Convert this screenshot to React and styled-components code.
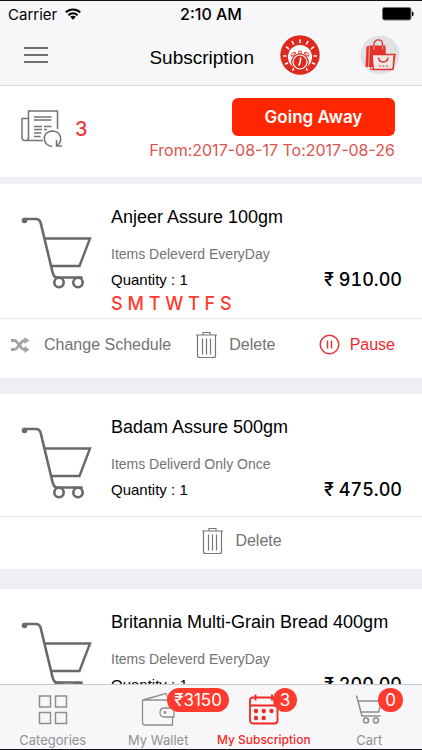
import styled, { createGlobalStyle } from 'styled-components';

const GlobalStyle = createGlobalStyle`
  * {
    box-sizing: border-box;
  }

  body {
    margin: 0;
    background: #efeef4;
    color: #000;
    font-family: "Liberation Sans", Arial, sans-serif;
  }

  button {
    padding: 0;
    border: none;
    background: none;
    font: inherit;
    color: inherit;
    cursor: pointer;
  }
`;

const red = '#ff3b30';
const grey = '#737373';

const subscriptions = [
  {
    id: 1,
    name: 'Anjeer Assure 100gm',
    delivery: 'Items Deleverd EveryDay',
    quantity: 1,
    price: '910.00',
    days: 'S M T W T F S',
    daily: true,
  },
  {
    id: 2,
    name: 'Badam Assure 500gm',
    delivery: 'Items Deliverd Only Once',
    quantity: 1,
    price: '475.00',
    daily: false,
  },
  {
    id: 3,
    name: 'Britannia Multi-Grain Bread 400gm',
    delivery: 'Items Deleverd EveryDay',
    quantity: 1,
    price: '200.00',
    days: 'S M T W T F S',
    daily: true,
  },
];

function App() {
  return (
    <Screen>
      <GlobalStyle />
      <Top>
        <StatusBar>
          <Carrier>
            Carrier
            <WifiIcon />
          </Carrier>
          <Clock>2:10 AM</Clock>
          <BatteryIcon />
        </StatusBar>
        <NavBar>
          <MenuButton aria-label="Menu">
            <MenuIcon />
          </MenuButton>
          <PageTitle>Subscription</PageTitle>
          <button aria-label="Reminders">
            <AlarmIcon />
          </button>
          <BagButton aria-label="Shop">
            <BagIcon />
          </BagButton>
        </NavBar>
      </Top>
      <Content>
        <Summary>
          <Count>
            <ScheduleIcon />
            3
          </Count>
          <Away>
            <AwayButton>Going Away</AwayButton>
            <AwayDates>From:2017-08-17 To:2017-08-26</AwayDates>
          </Away>
        </Summary>
        {subscriptions.map((item) => (
          <SubscriptionCard key={item.id} item={item} />
        ))}
      </Content>
      <TabBar>
        <Tab href="#categories">
          <GridIcon />
          Categories
        </Tab>
        <Tab href="#wallet">
          <WalletIcon />
          <Badge>₹3150</Badge>
          My Wallet
        </Tab>
        <Tab href="#subscription" $active>
          <CalendarIcon />
          <Badge>3</Badge>
          My Subscription
        </Tab>
        <Tab href="#cart">
          <SmallCartIcon />
          <Badge>0</Badge>
          Cart
        </Tab>
      </TabBar>
    </Screen>
  );
}

export default App;

function SubscriptionCard({ item }) {
  return (
    <Card $daily={item.daily}>
      <CardBody $daily={item.daily}>
        <CartIcon />
        <Details>
          <ItemName>{item.name}</ItemName>
          <Delivery>{item.delivery}</Delivery>
          <QuantityRow>
            <span>Quantity : {item.quantity}</span>
            <Price>₹ {item.price}</Price>
          </QuantityRow>
          {item.days && <Days>{item.days}</Days>}
        </Details>
      </CardBody>
      {item.daily ? (
        <DailyActions>
          <Action $gap={14}>
            <ShuffleIcon />
            Change Schedule
          </Action>
          <Action $gap={12}>
            <TrashIcon />
            Delete
          </Action>
          <Action $gap={10} $color="#f0282d">
            <PauseIcon />
            Pause
          </Action>
        </DailyActions>
      ) : (
        <OnceActions>
          <Action $gap={12}>
            <TrashIcon />
            Delete
          </Action>
        </OnceActions>
      )}
    </Card>
  );
}

const Screen = styled.div`
  display: flex;
  flex-direction: column;
  height: 100vh;
  overflow: hidden;
  border-top: 1px solid #15131a;
  border-bottom: 1px solid #15131a;
`;

const Top = styled.header`
  flex: none;
  background: #f7f7f9;
  border-bottom: 1px solid #dcdcdf;
`;

const StatusBar = styled.div`
  display: grid;
  grid-template-columns: 1fr auto 1fr;
  align-items: center;
  height: 26px;
  padding: 0 8px;
  font-family: Inter, "Liberation Sans", sans-serif;
  font-size: 15px;

  > svg {
    justify-self: end;
  }
`;

const Carrier = styled.div`
  display: flex;
  align-items: center;
  gap: 8px;
`;

const Clock = styled.div`
  font-size: 16px;
  font-weight: 500;
`;

const NavBar = styled.div`
  display: flex;
  align-items: center;
  height: 58px;
  padding: 0 22px 2px 24px;

  svg {
    display: block;
  }
`;

const MenuButton = styled.button`
  margin-right: auto;
`;

const PageTitle = styled.h1`
  margin: 0 26px 0 0;
  padding-top: 6px;
  font-size: 19px;
  font-weight: 400;
  line-height: 24px;
`;

const BagButton = styled.button`
  margin-left: 40px;
`;

const Content = styled.main`
  flex: 1;
  min-height: 0;
  overflow: hidden;
`;

const Summary = styled.section`
  display: flex;
  justify-content: space-between;
  align-items: flex-start;
  height: 91px;
  margin-bottom: 7px;
  padding: 12px 27px 0 20px;
  background: #fff;
`;

const Count = styled.div`
  display: flex;
  align-items: center;
  gap: 12px;
  padding-top: 11px;
  font-family: Inter, "Liberation Sans", sans-serif;
  font-size: 20px;
  font-weight: 500;
  color: #e83e3c;
`;

const Away = styled.div`
  display: flex;
  flex-direction: column;
  align-items: flex-end;
`;

const AwayButton = styled.button`
  width: 163px;
  height: 38px;
  border-radius: 6px;
  background: #ff2600;
  color: #fff;
  font-family: Inter, "Liberation Sans", sans-serif;
  font-size: 17px;
  font-weight: 600;
`;

const AwayDates = styled.p`
  margin: 4px 0 0;
  font-family: Inter, "Liberation Sans", sans-serif;
  font-size: 16px;
  line-height: 20px;
  color: #dc5450;
`;

const Card = styled.article`
  margin-bottom: ${(props) => (props.$daily ? 16 : 20)}px;
  background: #fff;
`;

const CardBody = styled.div`
  display: flex;
  align-items: flex-start;
  gap: 19px;
  padding: 20px 20px ${(props) => (props.$daily ? 3 : 13)}px;
  border-bottom: 1px solid #e8e7ee;

  > svg {
    flex: none;
    margin-top: 11px;
  }
`;

const Details = styled.div`
  flex: 1;
  min-width: 0;
`;

const ItemName = styled.h2`
  margin: 0 0 13px;
  font-size: 18px;
  font-weight: 400;
  line-height: 26px;
  white-space: nowrap;
`;

const Delivery = styled.p`
  margin: 0;
  font-size: 14px;
  line-height: 22px;
  color: ${grey};
`;

const QuantityRow = styled.div`
  display: flex;
  justify-content: space-between;
  align-items: center;
  height: 28px;
  font-size: 15px;
`;

const Price = styled.span`
  font-family: Inter, "Liberation Sans", sans-serif;
  font-size: 18px;
  font-weight: 500;
  font-variant-numeric: tabular-nums;
`;

const Days = styled.div`
  font-family: Inter, "Liberation Sans", sans-serif;
  font-size: 18px;
  font-weight: 500;
  line-height: 22px;
  color: ${red};
`;

const DailyActions = styled.div`
  display: flex;
  align-items: center;
  gap: 25px;
  height: 59px;
  padding: 0 27px 8px 10px;

  > :last-child {
    margin-left: auto;
  }
`;

const OnceActions = styled.div`
  display: flex;
  justify-content: center;
  align-items: center;
  height: 52px;
  padding: 0 0 4px 62px;
`;

const Action = styled.button`
  display: flex;
  align-items: center;
  gap: ${(props) => props.$gap}px;
  font-size: 16px;
  line-height: 20px;
  color: ${(props) => props.$color || grey};
`;

const TabBar = styled.nav`
  flex: none;
  display: grid;
  grid-template-columns: repeat(4, 1fr);
  height: 65px;
  background: #f7f6f8;
  border-top: 1px solid #c9c9cc;
`;

const Tab = styled.a`
  position: relative;
  display: flex;
  flex-direction: column;
  align-items: center;
  gap: 5px;
  padding-top: 7px;
  font-family: Inter, "Liberation Sans", sans-serif;
  font-size: ${(props) => (props.$active ? 12 : 13)}px;
  line-height: 18px;
  font-weight: ${(props) => (props.$active ? 500 : 400)};
  white-space: nowrap;
  text-decoration: none;
  color: ${(props) => (props.$active ? '#ee2a24' : '#929292')};
`;

const Badge = styled.span`
  position: absolute;
  top: 3px;
  left: calc(50% + 9px);
  min-width: 24px;
  height: 24px;
  padding: 0 7px;
  border-radius: 12px;
  background: ${red};
  color: #fff;
  font-size: 17px;
  font-weight: 400;
  line-height: 24px;
  text-align: center;
`;

function WifiIcon() {
  return (
    <svg width="16" height="12" viewBox="0 0 16 12" fill="none" stroke="#000" strokeWidth="2">
      <path d="M0.8 4.4C4.8 0.4 11.2 0.4 15.2 4.4" />
      <path d="M3.4 7.2C6 4.7 10 4.7 12.6 7.2" />
      <path d="M5.2 8.8C6.8 7.4 9.2 7.4 10.8 8.8L8 11.8Z" fill="#000" stroke="none" />
    </svg>
  );
}

function BatteryIcon() {
  return (
    <svg width="32" height="14" viewBox="0 0 32 14">
      <rect x="0.5" y="0.5" width="28.5" height="12.5" rx="2" fill="#000" stroke="#777" />
      <path d="M30 4.5C32.2 5 32.2 8.8 30 9.2Z" fill="#000" />
    </svg>
  );
}

function MenuIcon() {
  return (
    <svg width="24" height="18" viewBox="0 0 24 18" stroke="#6f6f6f" strokeWidth="2">
      <path d="M0 2H24M0 9H24M0 16H24" />
    </svg>
  );
}

function AlarmIcon() {
  return (
    <svg width="40" height="40" viewBox="0 0 40 40">
      <circle cx="20" cy="20" r="19.7" fill="#df2a20" />
      <circle cx="20" cy="22" r="12" fill="#fff" />
      <g stroke="#fff" strokeWidth="1.6" strokeLinecap="round">
        <path d="M20 5V7.500M12.200 6.500L13.500 9M27.800 6.500L26.500 9M6.500 12.200L8.500 13.700M33.500 12.200L31.500 13.700M3.800 21H6M36.200 21H34M5.500 29L7.500 28M34.500 29L32.500 28" />
      </g>
      <g fill="#fff" stroke="#df2a20" strokeWidth="1">
        <path d="M11.500 21.500C10.500 18.500 13 16.500 16 18Z" />
        <path d="M28.500 21.500C29.500 18.500 27 16.500 24 18Z" />
        <circle cx="20" cy="17.500" r="1.500" />
      </g>
      <path d="M14.500 32.500L12.500 35.500M25.500 32.500L27.500 35.500" stroke="#fff" strokeWidth="1.500" />
      <circle cx="20" cy="27" r="8.800" fill="#df2a20" />
      <circle cx="20" cy="27" r="7" fill="#df2a20" stroke="#fff" strokeWidth="1.200" />
      <path d="M20.800 22.500L20 27.500L18.700 30.500" fill="none" stroke="#fff" strokeWidth="1.600" />
    </svg>
  );
}

function BagIcon() {
  return (
    <svg width="40" height="40" viewBox="0 0 40 40">
      <circle cx="20" cy="20" r="19.5" fill="#e0e1e2" />
      <path d="M14 14V9C14 3.500 22.500 3.500 22.500 9V14" fill="none" stroke="#e5322b" strokeWidth="1.300" />
      <path d="M6.500 11.500L10 10.500H25.500L26.500 32H5.500Z" fill="#e5322b" />
      <path d="M9.500 11L8.500 32M14 11V14.500M22.500 11V14.500" stroke="#e0e1e2" strokeWidth="0.700" />
      <path d="M12 19.500H35L33 34.500H13.500Z" fill="#f0e9e9" stroke="#e5322b" strokeWidth="1.300" />
      <path d="M12 19.500L10.500 34.500H13.500M35 19.500L33.500 22L33 34.500" fill="none" stroke="#e5322b" strokeWidth="0.900" />
      <path d="M18.500 22.500C19 28.500 27.500 28.500 28 22.500" fill="none" stroke="#e5322b" strokeWidth="1.500" />
      <path d="M19 31H21M22.500 31H24.500M26 31H28" stroke="#e5322b" strokeWidth="1.200" />
    </svg>
  );
}

function ScheduleIcon() {
  return (
    <svg width="43" height="40" viewBox="0 0 43 40" fill="none" stroke="#747474" strokeWidth="1.5">
      <path d="M23 31.500H5C3 31.500 2 30.500 2 28.500V9.500H8.500M8.500 28C8.500 30.500 7.500 31.500 5.500 31.500" />
      <path d="M8.500 29V2H37.500V20" />
      <path d="M14 8H31.500M14 11H31.500M14 17.500H22M24 17.500H31.500M14 20.500H22M24 20.500H27M14 24H21.500M14 27.500H20.500" />
      <path d="M32 37.500C22 36.500 21.500 22.500 32 22C41 22 43.500 32 37 36.500M36.500 31V37H42" />
    </svg>
  );
}

function CartIcon() {
  return (
    <svg width="72" height="76" viewBox="0 0 72 76" fill="none" stroke="#696969" strokeWidth="2">
      <circle cx="4.500" cy="5.500" r="2.800" fill="#696969" stroke="none" />
      <path d="M4 4H16C18.500 4 20 5.500 20.700 8L32.500 57C33.500 61 34.500 62.500 38 62.500H61.500" strokeWidth="2.600" strokeLinecap="round" />
      <path d="M24.500 23.500H70L59.500 51H31.500" strokeWidth="2.400" />
      <circle cx="39" cy="67.500" r="4.700" strokeWidth="2.600" />
      <circle cx="58" cy="67.500" r="4.700" strokeWidth="2.600" />
    </svg>
  );
}

function ShuffleIcon() {
  return (
    <svg width="20" height="16" viewBox="0 0 20 16" fill="none" stroke="#a2a2a2" strokeWidth="2.8">
      <path d="M1 3.500H4C8.500 3.500 10 12.500 14.500 12.500H16" />
      <path d="M1 12.500H4C8.500 12.500 10 3.500 14.500 3.500H16" />
      <path d="M14.500 0L19.500 3.500L14.500 7ZM14.500 9L19.500 12.500L14.500 16Z" fill="#a2a2a2" stroke="none" />
    </svg>
  );
}

function TrashIcon() {
  return (
    <svg width="21" height="28" viewBox="0 0 21 28" fill="none" stroke="#777" strokeWidth="1.2">
      <path d="M0 4H21M7 4V1.500H14V4M1.500 4V24.500C1.500 26 2 26.500 3.500 26.500H17.500C19 26.500 19.500 26 19.500 24.500V4" />
      <path d="M6.500 7.500V23.500M10.500 7.500V23.500M14.500 7.500V23.500" />
    </svg>
  );
}

function PauseIcon() {
  return (
    <svg width="21" height="21" viewBox="0 0 21 21" fill="none" stroke="#e0353a" strokeWidth="1.5">
      <circle cx="10.500" cy="10.500" r="9.300" />
      <path d="M8.500 6.500V14.500M12.500 6.500V14.500" />
    </svg>
  );
}

function GridIcon() {
  return (
    <svg width="32" height="34" viewBox="0 0 32 34" fill="none" stroke="#8f8f8f" strokeWidth="1.5">
      <rect x="2.500" y="4" width="11" height="11" />
      <rect x="18.500" y="4" width="11" height="11" />
      <rect x="2.500" y="20.500" width="11" height="11" />
      <rect x="18.500" y="20.500" width="11" height="11" />
    </svg>
  );
}

function WalletIcon() {
  return (
    <svg width="34" height="34" viewBox="0 0 34 34" fill="none" stroke="#8f8f8f" strokeWidth="1.3">
      <path d="M1.500 8V30C1.500 32 2 33 4 33H31.500V25M31.500 17V8H1.500L25 1.500L28 8" />
      <path d="M33 16H23.500C17.500 16 17.500 25 23.500 25H33Z" />
      <circle cx="24" cy="20.500" r="0.800" fill="#8f8f8f" />
    </svg>
  );
}

function CalendarIcon() {
  return (
    <svg width="32" height="34" viewBox="0 0 32 34" fill="none" stroke="#ee2a24" strokeWidth="1.8">
      <rect x="2" y="5.500" width="27.500" height="26" rx="3" />
      <path d="M2 13.500H29.500M7.500 2.500V8.500M24 2.500V8.500" />
      <g fill="#ee2a24" stroke="none">
        <circle cx="8" cy="19" r="2.200" />
        <circle cx="15.700" cy="19" r="2.200" />
        <circle cx="23.500" cy="19" r="2.200" />
        <circle cx="8" cy="26" r="2.200" />
        <circle cx="15.700" cy="26" r="2.200" />
      </g>
    </svg>
  );
}

function SmallCartIcon() {
  return (
    <svg width="28" height="34" viewBox="0 0 28 34" fill="none" stroke="#8f8f8f" strokeWidth="1.5">
      <path d="M1.500 3.500L7 24H25.500M3.500 9H27L23.500 20H6" />
      <circle cx="11" cy="28.500" r="2.500" />
      <circle cx="21" cy="28.500" r="2.500" />
    </svg>
  );
}
